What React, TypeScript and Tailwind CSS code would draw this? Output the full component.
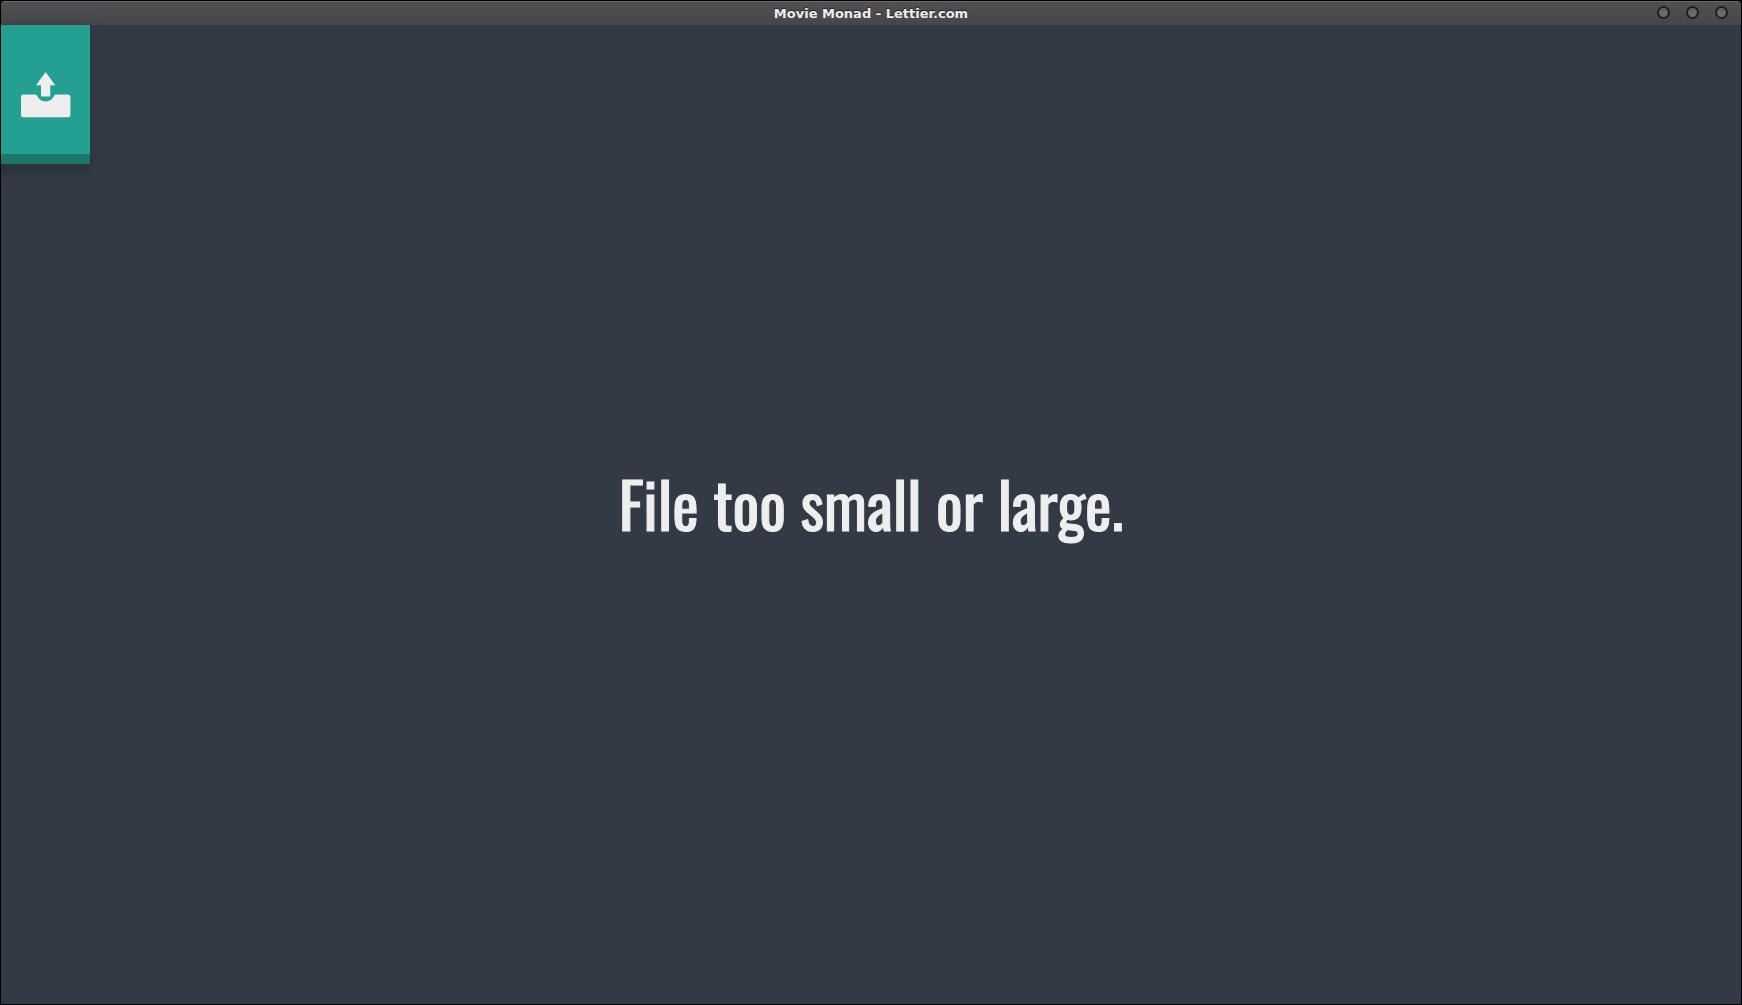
const windowActions = ["Minimize", "Maximize", "Close"];

function TitleBar() {
  return (
    <header className="grid h-6 shrink-0 grid-cols-[1fr_auto_1fr] items-center border-t border-[#6a6a6d] bg-linear-to-b from-[#515154] to-[#464648]">
      <h1 className="col-start-2 font-['DejaVu_Sans',sans-serif] text-[13px] leading-4 font-bold text-[#eeeeee] [text-shadow:0_-1px_1px_#222222]">
        Movie Monad - Lettier.com
      </h1>
      <div className="flex justify-end gap-4 pr-[13px] pb-0.5">
        {windowActions.map((action) => (
          <button
            key={action}
            type="button"
            aria-label={action}
            className="size-[13px] rounded-full border-2 border-[#1e1e1f] bg-linear-to-b from-[#5e5e60] to-[#727274] bg-origin-border"
          />
        ))}
      </div>
    </header>
  );
}

function UploadIcon() {
  return (
    <svg viewBox="0 0 50 46" className="h-[46px] w-[50px]" fill="#eeeeee" aria-hidden="true">
      <path d="M24.6 0 34.3 13.3H29.3V24.6H20V13.3H15Z" />
      <path d="M2.5 22.4H14.5Q15.6 22.4 16.2 24A9.2 9.2 0 0 0 33 24Q33.6 22.4 34.7 22.4H47Q49.4 22.4 49.4 24.8V43Q49.4 45.3 47 45.3H2.5Q0 45.3 0 43V24.8Q0 22.4 2.5 22.4Z" />
    </svg>
  );
}

export default function App() {
  return (
    <div className="h-screen bg-black p-px">
      <div className="flex h-full flex-col overflow-hidden rounded-t-sm bg-[#323a45]">
        <TitleBar />
        <main className="grid min-h-0 flex-1">
          <button
            type="button"
            aria-label="Upload a file"
            className="col-start-1 row-start-1 flex h-[139px] w-[89px] items-center justify-center self-start border-b-10 border-[#1c7569] bg-[#23a092] pt-[11px] shadow-[0_10px_3px_-1px_#2b3339,0_4px_10px_#2c343d]"
          >
            <UploadIcon />
          </button>
          <p
            role="alert"
            className="col-start-1 row-start-1 self-center justify-self-center pb-6 font-[Oswald,'Liberation_Sans_Narrow',sans-serif] text-[63px] leading-none whitespace-nowrap text-[#eeeeee] [-webkit-text-stroke:1px_#eeeeee]"
          >
            File too small or large.
          </p>
        </main>
      </div>
    </div>
  );
}
